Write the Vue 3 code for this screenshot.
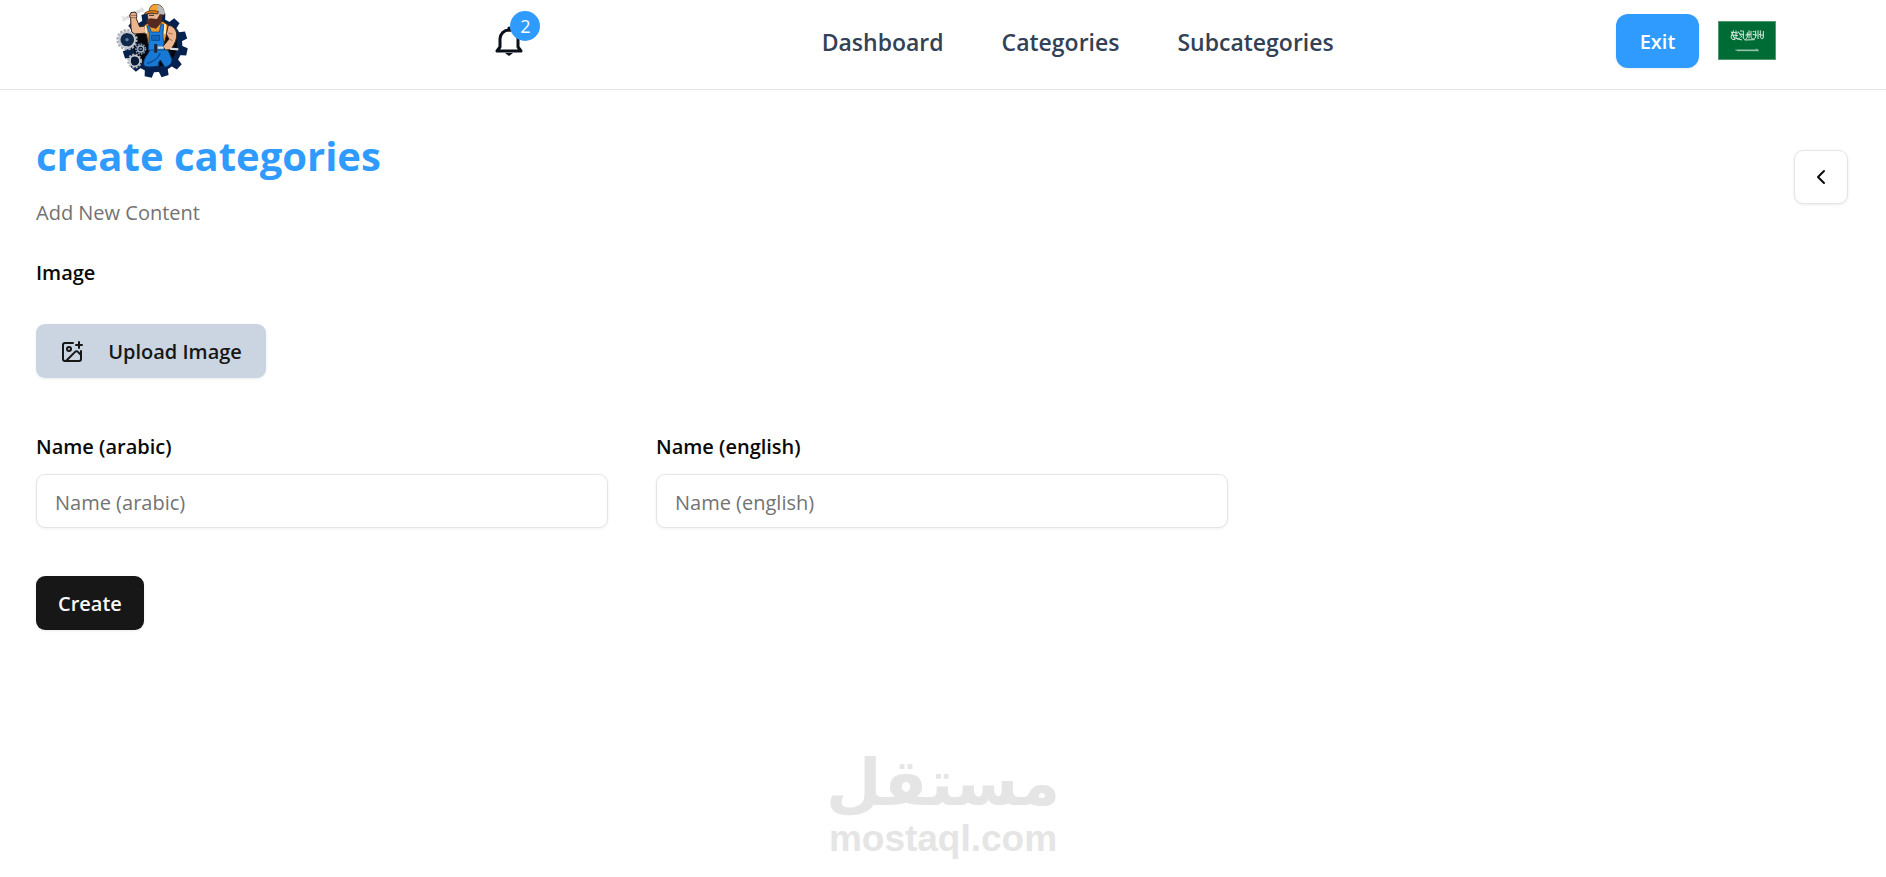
<script setup>
import { ref } from 'vue';

// --- NAV ---
const links = ['Dashboard', 'Categories', 'Subcategories'];
const notifications = ref(2);

// --- FORM ---
const fields = [
  { id: 'name-ar', label: 'Name (arabic)' },
  { id: 'name-en', label: 'Name (english)' }
];
const form = ref({ 'name-ar': '', 'name-en': '' });
const fileInput = ref(null);

const pickImage = () => fileInput.value.click();

// gear teeth angles
const teeth = Array.from({ length: 12 }, (_, i) => i * 30 + 12);
</script>

<template>
  <div class="page">
    <header class="header">
      <a href="#" class="logo" aria-label="Home">
        <svg viewBox="30 14 222 222" width="74" height="74">
          <!-- big gear -->
          <g fill="#06214d">
            <path v-for="a in teeth" :key="a" d="M135 62 L139 39 H161 L165 62 Z" :transform="`rotate(${a} 150 137)`" />
            <circle cx="150" cy="137" r="82" />
          </g>
          <circle cx="150" cy="137" r="66" fill="#05070d" />
          <!-- small gears -->
          <g fill="none">
            <circle cx="66" cy="121" r="28" stroke="#a9adb3" stroke-width="8" stroke-dasharray="7 4" />
            <circle cx="66" cy="121" r="24" stroke="#c3c7cc" stroke-width="6" />
            <circle cx="89" cy="185" r="19" stroke="#a9adb3" stroke-width="7" stroke-dasharray="6 4" />
            <circle cx="89" cy="185" r="16" stroke="#c3c7cc" stroke-width="5" />
            <circle cx="107" cy="149" r="14" stroke="#7795b8" stroke-width="6" stroke-dasharray="5 3" />
            <circle cx="107" cy="149" r="9" stroke="#a3b4c8" stroke-width="4" />
          </g>
          <circle cx="66" cy="121" r="20" fill="#10294b" />
          <circle cx="66" cy="121" r="5" fill="#5c7ea8" />
          <circle cx="89" cy="185" r="12" fill="#0b1c38" />
          <circle cx="107" cy="149" r="4" fill="#5c7ea8" />
          <!-- wrench -->
          <path d="M57 60 L112 31" stroke="#d5d8dc" stroke-width="9" stroke-linecap="round" />
          <path d="M50 52 L63 58 L54 66 M110 24 L106 34 L118 37" stroke="#e3e6e9" stroke-width="6" fill="none" />
          <!-- kneeling legs -->
          <path d="M134 142 Q136 158 122 172 Q112 190 118 200 Q126 206 162 200 Q158 190 166 182 L180 204 Q202 198 201 180 L185 142 Z" fill="#1879d4" stroke="#0a2f63" stroke-width="3" />
          <path d="M126 192 Q154 187 166 162" stroke="#0c4c9a" stroke-width="4" fill="none" />
          <!-- raised arm -->
          <path d="M78 40 Q70 48 77 58 L78 84 Q77 100 88 104 L128 101 L134 78 L104 82 L94 58 Q98 44 90 38 Z" fill="#eab58f" stroke="#34231d" stroke-width="3" />
          <path d="M76 48 H94 M77 55 H93" stroke="#77462f" stroke-width="2" />
          <!-- shirt and overalls -->
          <path d="M118 76 L136 70 L174 66 L190 78 L185 106 L174 146 H132 L124 104 Z" fill="#f09a28" stroke="#34231d" stroke-width="3" />
          <path d="M121 80 L124 103 M180 74 V104" stroke="#fff4dd" stroke-width="5" />
          <path d="M132 78 L139 98 H163 L168 73 L176 76 L173 103 L178 152 H130 L133 103 L126 80 Z" fill="#1980df" stroke="#0a3976" stroke-width="2" />
          <path d="M140 108 H164 V123 H140 Z" fill="#1168bd" stroke="#0a3976" stroke-width="2" />
          <!-- right arm with hammer -->
          <path d="M190 77 Q211 82 215 101 Q218 126 196 151 L181 152 L174 141 L192 119 L184 104 Z" fill="#eab58f" stroke="#34231d" stroke-width="3" />
          <path d="M190 101 L203 104 M193 119 L202 124" stroke="#a86b4c" stroke-width="3" />
          <path d="M158 145 H176 M195 148 L220 150" stroke="#d6dbe0" stroke-width="7" />
          <path d="M152 134 V160" stroke="#22272e" stroke-width="9" />
          <!-- head -->
          <path d="M127 43 L170 42 L168 67 L148 80 L130 68 Z" fill="#eab58f" stroke="#34231d" stroke-width="2" />
          <path d="M122 65 L136 57 L156 59 L165 43 L173 48 L169 70 L153 88 L136 84 Z" fill="#572a20" />
          <path d="M132 48 L147 48" stroke="#34231d" stroke-width="3" />
          <path d="M132 37 Q133 15 155 14 Q178 18 178 46 L160 42 Z" fill="#f3a12e" stroke="#34231d" stroke-width="2" />
          <path d="M157 16 Q178 20 178 46 L159 43 Z" fill="#b9bbbd" />
          <path d="M119 41 Q135 29 161 37 L157 44 Q136 38 120 45 Z" fill="#df7d16" stroke="#34231d" stroke-width="2" />
        </svg>
      </a>

      <button type="button" class="bell" aria-label="Notifications">
        <svg viewBox="0 0 30 30" width="30" height="30">
          <path d="M3 25 H27 L24 21 V13 A9 9 0 0 0 6 13 V21 Z" fill="none" stroke="#0b0f19" stroke-width="3" stroke-linejoin="round" />
          <path d="M15 4 V2" stroke="#0b0f19" stroke-width="3" stroke-linecap="round" />
          <path d="M11 27 H19 L15 30 Z" fill="#0b0f19" />
        </svg>
        <span class="badge">{{ notifications }}</span>
      </button>

      <nav class="nav">
        <a v-for="link in links" :key="link" href="#">{{ link }}</a>
      </nav>

      <div class="actions">
        <button type="button" class="btn exit">Exit</button>
        <button type="button" class="flag" aria-label="Arabic">
          <svg viewBox="0 0 174 117" width="58" height="39">
            <rect width="174" height="117" fill="#4f9b6d" />
            <rect x="3" y="3" width="168" height="111" fill="#006c35" />
            <g fill="none" stroke="#d5e9dd" stroke-width="3">
              <path d="M40 32 L50 53 M47 28 L39 48 Q40 58 52 56 M54 29 V49 Q60 60 67 49 M60 31 L72 49 M76 29 V52 Q83 60 88 48 V34 M93 28 V52 M99 30 V50 Q108 59 113 48 V29 M120 28 V54 M127 28 V48 Q131 57 136 51 V30" />
              <path d="M40 34 L60 36 M42 42 L60 44 M64 38 L78 42 M82 42 L98 40 M104 40 L118 43 M47 50 L72 57 M80 57 L110 56 M122 40 L136 43 M66 30 H74 M104 32 H110" />
            </g>
            <path d="M52 87 H122 M57 89 H118 M115 83 L121 91" stroke="#d5e9dd" stroke-width="2" fill="none" />
          </svg>
        </button>
      </div>
    </header>

    <main class="content">
      <div class="heading">
        <div>
          <h1>create categories</h1>
          <p>Add New Content</p>
        </div>
        <button type="button" class="btn back" aria-label="Back">
          <svg viewBox="0 0 24 24" width="24" height="24" fill="none" stroke="currentColor" stroke-width="2" stroke-linecap="round" stroke-linejoin="round">
            <path d="M15 18 L9 12 L15 6" />
          </svg>
        </button>
      </div>

      <form @submit.prevent>
        <div class="upload">
          <label for="image">Image</label>
          <input id="image" ref="fileInput" type="file" accept="image/*" hidden>
          <button type="button" class="btn upload-btn" @click="pickImage">
            <svg viewBox="0 0 24 24" width="24" height="24" fill="none" stroke="currentColor" stroke-width="2" stroke-linecap="round" stroke-linejoin="round">
              <path d="M13 3H5a2 2 0 0 0-2 2v14a2 2 0 0 0 2 2h14a2 2 0 0 0 2-2v-8" />
              <path d="M16 5h6M19 2v6" />
              <circle cx="9" cy="9" r="2" />
              <path d="m21 15-3.086-3.086a2 2 0 0 0-2.828 0L6 21" />
            </svg>
            Upload Image
          </button>
        </div>

        <div class="fields">
          <div v-for="field in fields" :key="field.id" class="field">
            <label :for="field.id">{{ field.label }}</label>
            <input :id="field.id" v-model="form[field.id]" type="text" :placeholder="field.label">
          </div>
        </div>

        <button type="submit" class="btn create">Create</button>
      </form>
    </main>

    <footer class="watermark">
      <span class="mark-ar" lang="ar" dir="rtl">مستقل</span>
      <span class="mark-en">mostaql.com</span>
    </footer>
  </div>
</template>

<style>
body {
  margin: 0;
  background: #ffffff;
}
</style>

<style scoped>
* {
  box-sizing: border-box;
}

.page {
  display: flex;
  flex-direction: column;
  min-height: 100vh;
  font-family: 'Segoe UI', 'Open Sans', 'Noto Sans', sans-serif;
  font-size: 20px;
  line-height: 30px;
  color: #0a0a0a;
}

button,
input {
  font: inherit;
  color: inherit;
}

button {
  cursor: pointer;
}

/* Header */
.header {
  display: flex;
  justify-content: space-between;
  align-items: center;
  height: 90px;
  padding: 0 110px 8px 115px;
  border-bottom: 1px solid #e5e5e5;
}

.logo {
  display: flex;
}

.bell {
  position: relative;
  display: flex;
  justify-content: center;
  width: 68px;
  padding: 0 0 0 8px;
  border: 0;
  background: none;
}

.badge {
  position: absolute;
  top: -15px;
  left: 39px;
  width: 30px;
  height: 30px;
  border-radius: 50%;
  background: #2f9bff;
  color: #ffffff;
  font-size: 18px;
  text-align: center;
}

.nav {
  display: flex;
  gap: 58px;
  padding-top: 2px;
  font-size: 23px;
  font-weight: 600;
}

.nav a {
  color: #334155;
  text-decoration: none;
}

.actions {
  display: flex;
  align-items: center;
  gap: 19px;
}

.btn {
  display: flex;
  align-items: center;
  justify-content: center;
  height: 54px;
  padding: 2px 22px 0;
  border: 0;
  border-radius: 9px;
  font-weight: 600;
  box-shadow: 0 1px 3px rgba(0, 0, 0, 0.08);
}

.exit {
  width: 83px;
  border-radius: 12px;
  background: #2f9bff;
  color: #ffffff;
}

.flag {
  display: flex;
  padding: 0;
  border: 0;
  background: none;
}

/* Content */
.content {
  padding: 36px 38px 0 36px;
}

.heading {
  display: flex;
  justify-content: space-between;
  align-items: center;
}

h1 {
  margin: 0;
  font-size: 40px;
  line-height: 60px;
  font-weight: 700;
  color: #2f9bff;
}

p {
  margin: 12px 0 0;
  color: #737373;
  line-height: 30px;
}

.back {
  width: 54px;
  padding: 0;
  border: 1px solid #e5e5e5;
  background: #ffffff;
}

label {
  display: block;
  font-weight: 600;
}

.upload {
  margin-top: 30px;
}

.upload-btn {
  width: 230px;
  margin-top: 36px;
  gap: 24px;
  background: #cbd5e1;
  color: #171717;
}

.fields {
  display: grid;
  grid-template-columns: repeat(3, 1fr);
  gap: 48px;
  margin-top: 54px;
}

.field input {
  display: block;
  width: 100%;
  height: 54px;
  margin-top: 12px;
  padding: 2px 18px 0;
  border: 1px solid #e5e5e5;
  border-radius: 9px;
  background: #ffffff;
  box-shadow: 0 1px 3px rgba(0, 0, 0, 0.06);
  outline: none;
}

.field input::placeholder {
  color: #737373;
  opacity: 1;
}

.create {
  margin-top: 48px;
  background: #171717;
  color: #fafafa;
}

/* Watermark */
.watermark {
  display: flex;
  flex-direction: column;
  align-items: center;
  margin-top: auto;
  padding-bottom: 18px;
  color: #e5e5e5;
  font-weight: 700;
}

.mark-ar {
  font-family: 'DejaVu Sans', sans-serif;
  font-size: 64px;
  line-height: 72px;
}

.mark-en {
  font-family: 'Liberation Sans', sans-serif;
  font-size: 37px;
  line-height: 40px;
}
</style>
